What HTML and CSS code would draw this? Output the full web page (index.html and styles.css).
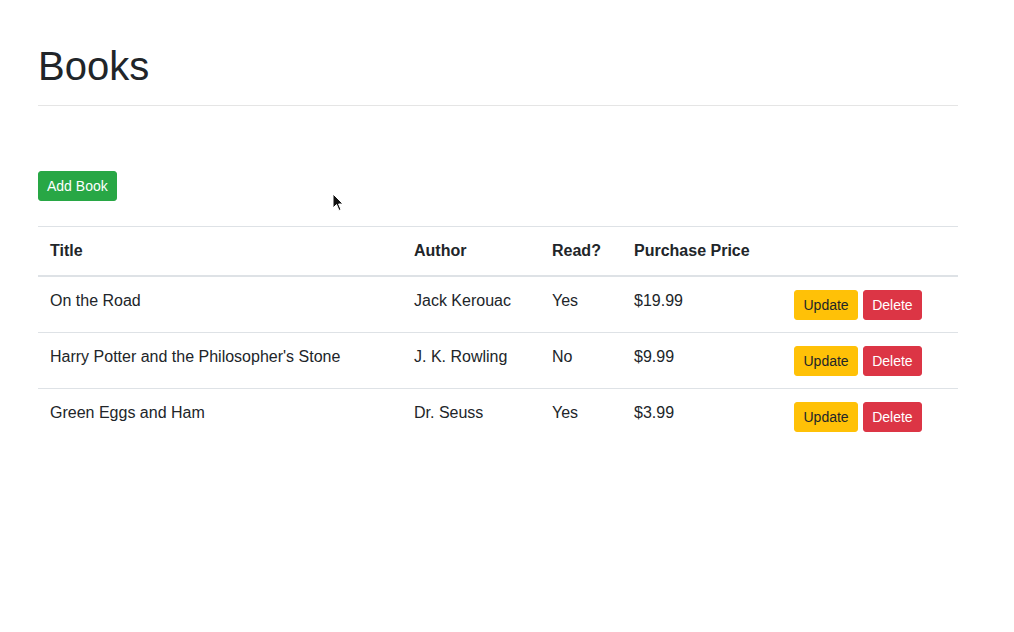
FILE: index.html
```html
<!DOCTYPE html>
<html>
<head>
<meta charset="utf-8">
<link rel="stylesheet" href="styles.css">
</head>
<body>
<div class="page">
  <h1 class="title">Books</h1>
  <hr class="rule">
  <div class="toolbar">
    <button class="btn btn-success">Add Book</button>
  </div>
  <table class="books">
    <colgroup>
      <col class="c-title"><col class="c-author"><col class="c-read"><col class="c-price"><col class="c-actions">
    </colgroup>
    <thead>
      <tr><th>Title</th><th>Author</th><th>Read?</th><th>Purchase Price</th><th></th></tr>
    </thead>
    <tbody>
      <tr><td>On the Road</td><td>Jack Kerouac</td><td>Yes</td><td>$19.99</td>
        <td><div class="actions"><button class="btn btn-warning">Update</button><button class="btn btn-danger">Delete</button></div></td></tr>
      <tr><td>Harry Potter and the Philosopher's Stone</td><td>J. K. Rowling</td><td>No</td><td>$9.99</td>
        <td><div class="actions"><button class="btn btn-warning">Update</button><button class="btn btn-danger">Delete</button></div></td></tr>
      <tr><td>Green Eggs and Ham</td><td>Dr. Seuss</td><td>Yes</td><td>$3.99</td>
        <td><div class="actions"><button class="btn btn-warning">Update</button><button class="btn btn-danger">Delete</button></div></td></tr>
    </tbody>
  </table>
</div>
<svg class="cursor" width="12" height="19" viewBox="0 0 12 19"><path d="M1 1 L1 15 L4.5 11.5 L7 17.5 L9 16.6 L6.6 11 L11 11 Z" fill="#111" stroke="#fff" stroke-width="1"/></svg>
</body>
</html>
```
FILE: styles.css
```css
html, body {
  margin: 0;
  padding: 0;
  background: #fff;
}
body {
  font-family: "Liberation Sans", Arial, sans-serif;
  font-size: 16px;
  line-height: 1.5;
  color: #212529;
}
.page {
  width: 920px;
  margin-left: 38px;
  padding-top: 42px;
}
.title {
  margin: 0 0 8px;
  font-size: 40px;
  font-weight: 500;
  line-height: 1.2;
}
.rule {
  margin: 15px 0 0;
  border: 0;
  border-top: 1px solid rgba(0,0,0,0.1);
}
.toolbar {
  box-sizing: border-box;
  padding-top: 65px;
  height: 120px;
}
.btn {
  display: inline-block;
  font-family: inherit;
  font-size: 14px;
  line-height: 20px;
  padding: 4px 8px;
  border: 1px solid transparent;
  border-radius: 3px;
  cursor: pointer;
}
.btn-success { background: #28a745; border-color: #28a745; color: #fff; }
.btn-warning { background: #ffc107; border-color: #ffc107; color: #212529; padding: 4px 8.5px; }
.btn-danger { background: #dc3545; border-color: #dc3545; color: #fff; }
.books {
  width: 920px;
  border-collapse: collapse;
  table-layout: fixed;
}
.c-title { width: 364px; }
.c-author { width: 138px; }
.c-read { width: 82px; }
.c-price { width: 160px; }
.c-actions { width: 176px; }
.books th, .books td {
  padding: 12px;
  text-align: left;
  vertical-align: top;
  border-top: 1px solid #dee2e6;
}
.books th {
  font-weight: 700;
  border-bottom: 2px solid #dee2e6;
}
.actions {
  display: flex;
  gap: 5px;
  padding-top: 1px;
}
.cursor {
  position: absolute;
  left: 332px;
  top: 193px;
}
```
